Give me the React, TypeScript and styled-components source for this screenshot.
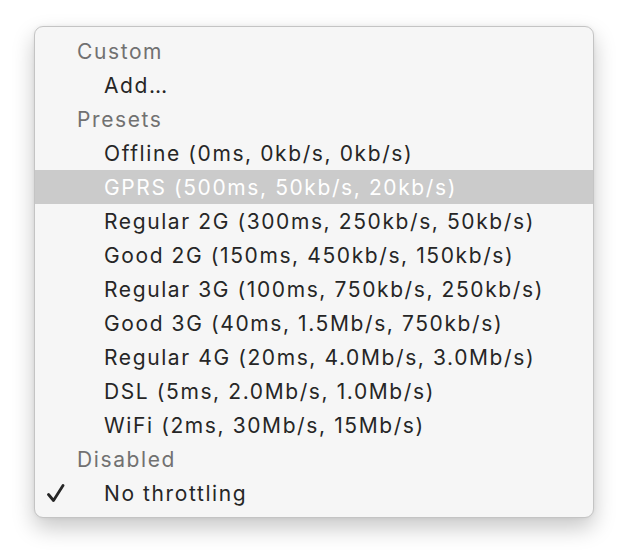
import styled, {createGlobalStyle} from "styled-components";

const GlobalStyle = createGlobalStyle`
  html, body {
    margin: 0;
    padding: 0;
    background: #ffffff;
  }
  body {
    font-family: Inter, "Liberation Sans", Arial, sans-serif;
  }
`

const Page = styled.div`
  width: 628px;
  height: 560px;
  padding: 26px 0 0 34px;
  box-sizing: border-box;
`

const Menu = styled.div`
  width: 560px;
  box-sizing: border-box;
  padding: 7px 0;
  background: #f6f6f6;
  border: 1px solid #c4c4c4;
  border-radius: 9px;
  box-shadow: 0 10px 22px rgba(0, 0, 0, 0.22), 0 0 4px rgba(0, 0, 0, 0.06);
  overflow: hidden;
`

const Header = styled.div`
  height: 34px;
  display: flex;
  align-items: center;
  padding-left: 42px;
  font-size: 21px;
  letter-spacing: 1.6px;
  color: #717171;
`

const Item = styled.div<{ $active?: boolean }>`
  height: 34px;
  display: flex;
  align-items: center;
  font-size: 21px;
  letter-spacing: 1.6px;
  color: ${p => p.$active ? "#ffffff" : "#262626"};
  background: ${p => p.$active ? "#cbcbcb" : "transparent"};
`

const Check = styled.span`
  width: 69px;
  height: 34px;
  padding-left: 12px;
  box-sizing: border-box;
  display: flex;
  align-items: center;
`

const CheckMark = () => (
    <svg width="18" height="18" viewBox="0 0 18 18">
        <path d="M1.5 10.5 L6.5 16.5 L16 1.5" fill="none" stroke="#262626" strokeWidth="2.8"
              strokeLinecap="round" strokeLinejoin="round"/>
    </svg>
)

type Entry = { label: string; active?: boolean; checked?: boolean }

const groups: { title: string; items: Entry[] }[] = [
    {title: "Custom", items: [{label: "Add…"}]},
    {
        title: "Presets", items: [
            {label: "Offline (0ms, 0kb/s, 0kb/s)"},
            {label: "GPRS (500ms, 50kb/s, 20kb/s)", active: true},
            {label: "Regular 2G (300ms, 250kb/s, 50kb/s)"},
            {label: "Good 2G (150ms, 450kb/s, 150kb/s)"},
            {label: "Regular 3G (100ms, 750kb/s, 250kb/s)"},
            {label: "Good 3G (40ms, 1.5Mb/s, 750kb/s)"},
            {label: "Regular 4G (20ms, 4.0Mb/s, 3.0Mb/s)"},
            {label: "DSL (5ms, 2.0Mb/s, 1.0Mb/s)"},
            {label: "WiFi (2ms, 30Mb/s, 15Mb/s)"},
        ]
    },
    {title: "Disabled", items: [{label: "No throttling", checked: true}]},
]

export default function App() {
    return (
        <>
            <GlobalStyle/>
            <Page>
                <Menu>
                    {groups.map(g => (
                        <div key={g.title}>
                            <Header>{g.title}</Header>
                            {g.items.map(it => (
                                <Item key={it.label} $active={it.active}>
                                    <Check>{it.checked ? <CheckMark/> : null}</Check>
                                    {it.label}
                                </Item>
                            ))}
                        </div>
                    ))}
                </Menu>
            </Page>
        </>
    );
}
